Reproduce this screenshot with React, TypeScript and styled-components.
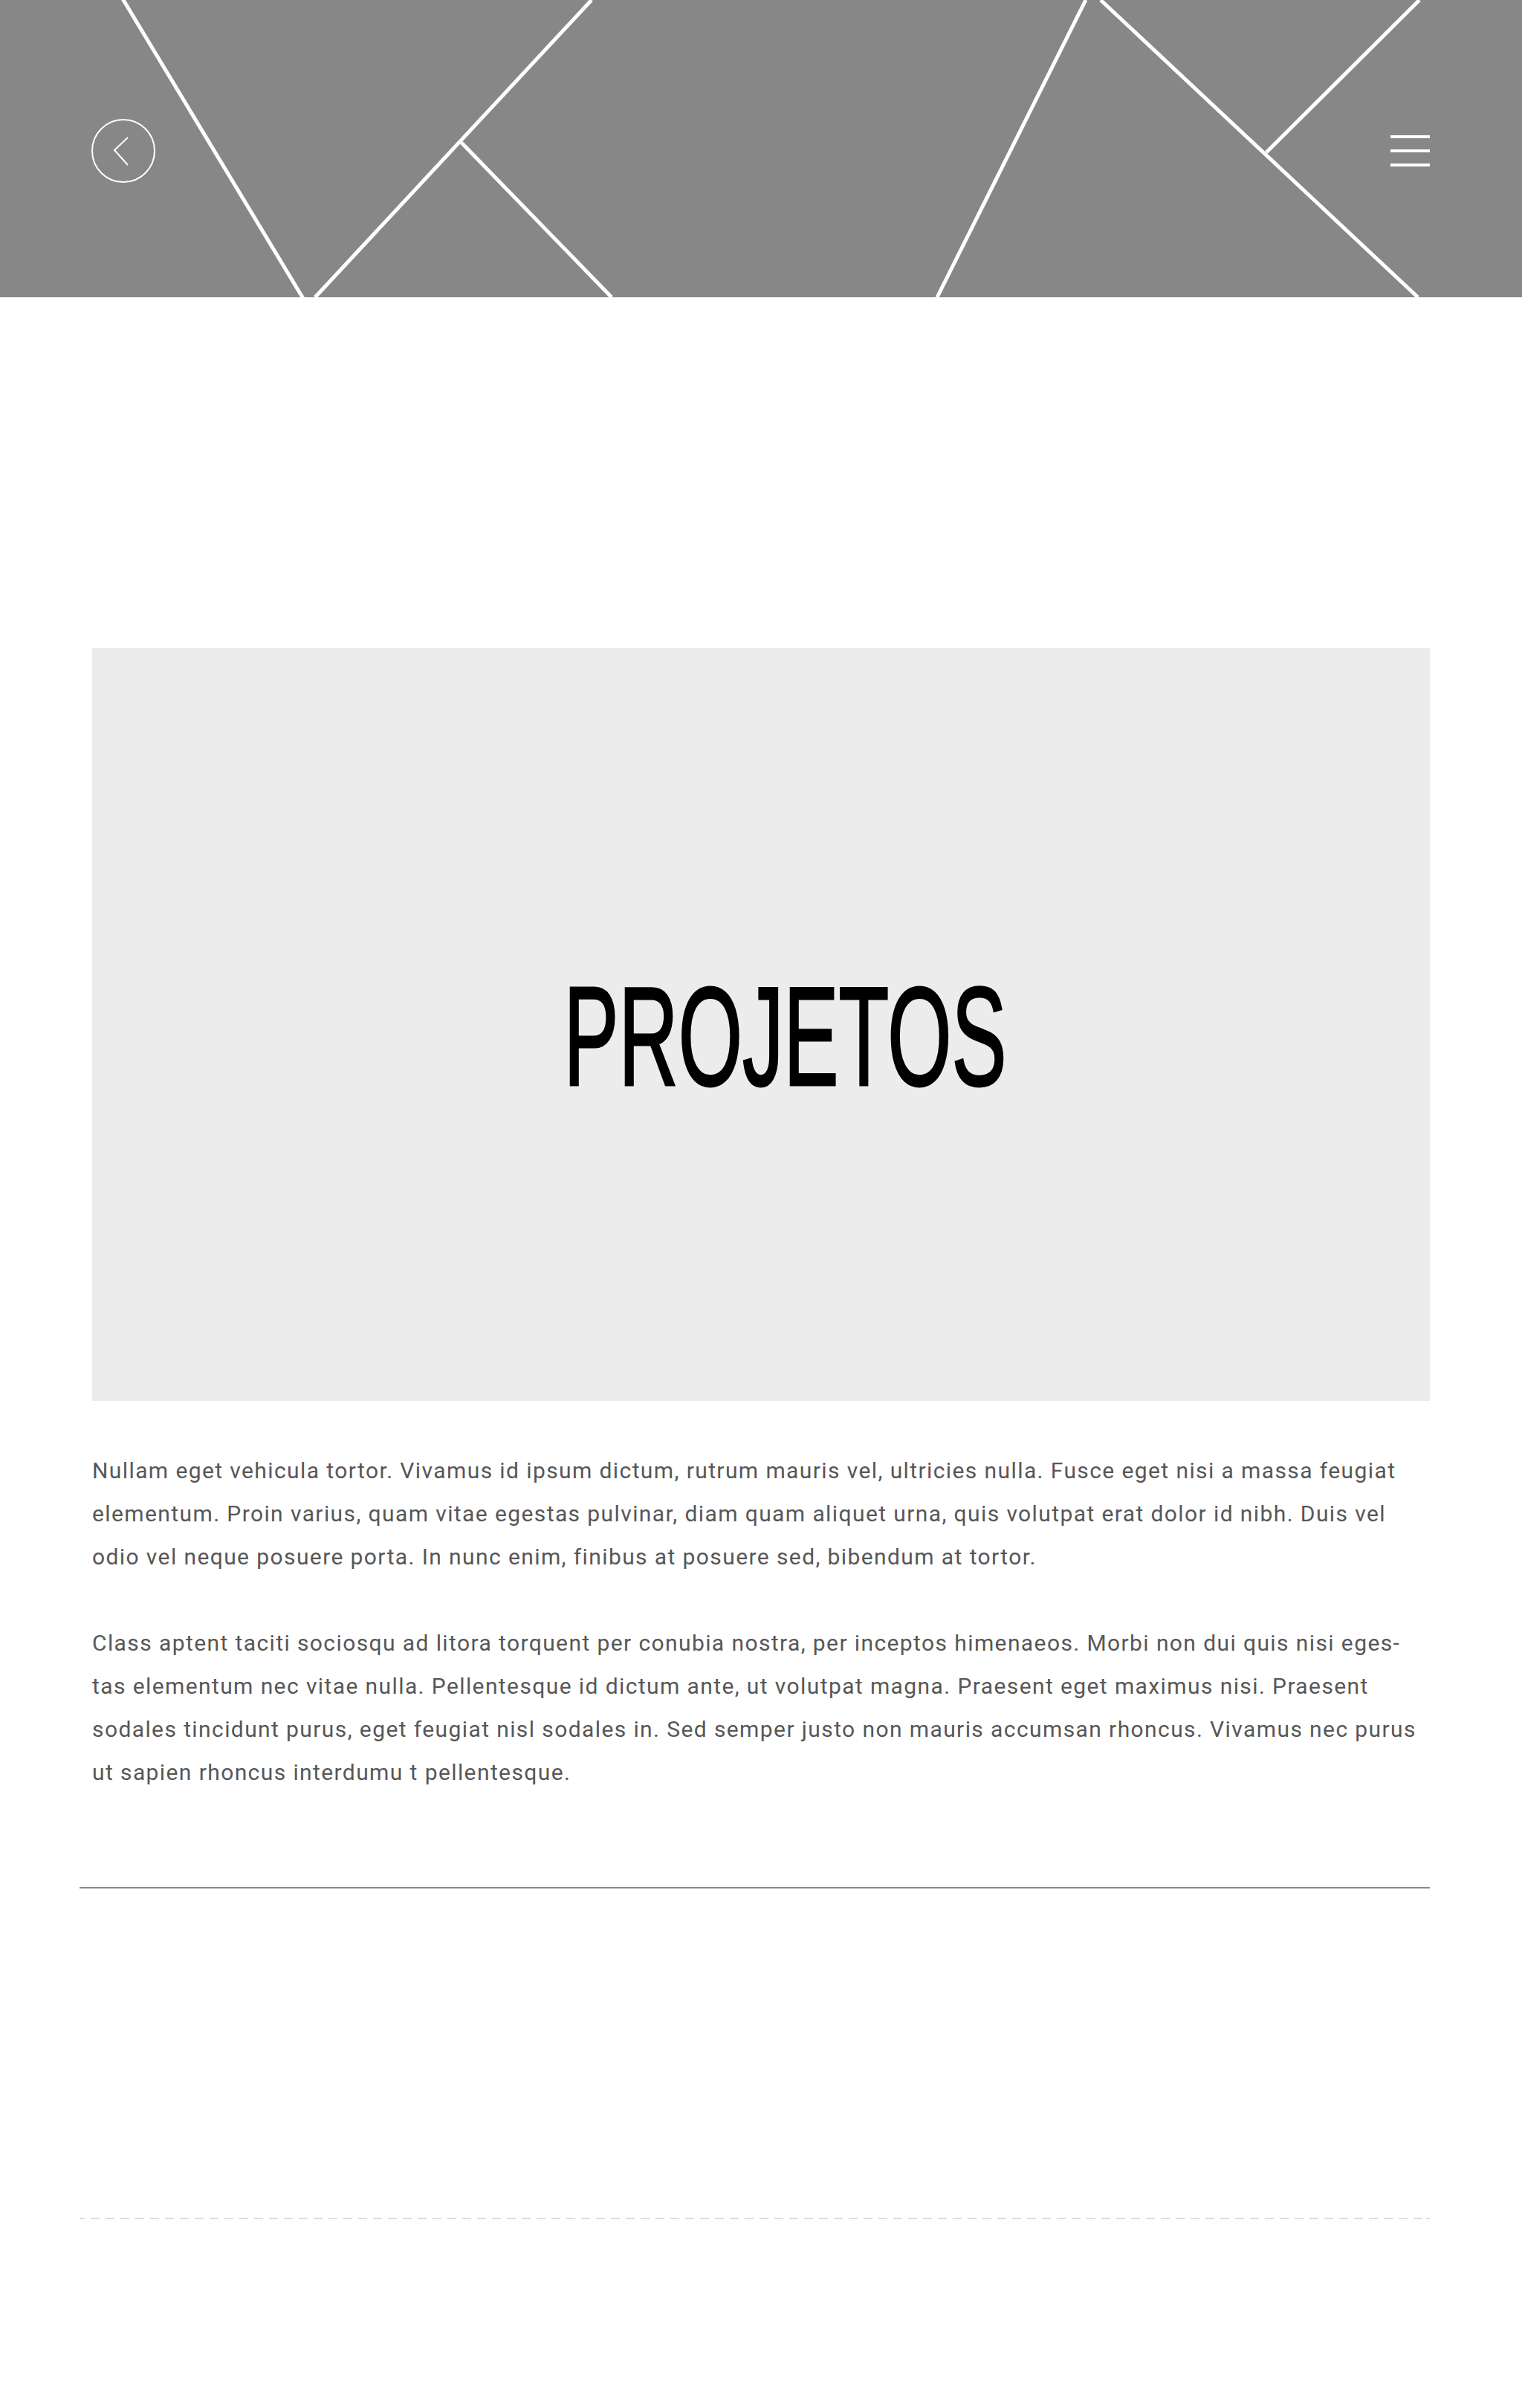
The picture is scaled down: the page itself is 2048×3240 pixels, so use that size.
import React from "react";
import styled, { createGlobalStyle } from "styled-components";

const GlobalStyle = createGlobalStyle`
  html, body {
    margin: 0;
    padding: 0;
    background: #ffffff;
  }
  body {
    font-family: Roboto, "Liberation Sans", Arial, sans-serif;
  }
`;

const Page = styled.div`
  width: 2048px;
  min-height: 3240px;
  background: #ffffff;
`;

const Header = styled.header`
  position: relative;
  height: 400px;
  background: #878787;
  overflow: hidden;
`;

const HeaderLines = styled.svg`
  position: absolute;
  inset: 0;
  width: 100%;
  height: 100%;
`;

const HeaderBar = styled.div`
  position: relative;
  height: 100%;
  box-sizing: border-box;
  display: flex;
  align-items: center;
  justify-content: space-between;
  padding: 6px 124px 0 122px;
`;

const BackButton = styled.button`
  width: 88px;
  height: 88px;
  padding: 0;
  border: none;
  background: transparent;
  cursor: pointer;
  display: block;
`;

const MenuButton = styled.button`
  width: 53px;
  height: 42px;
  padding: 0;
  border: none;
  background: transparent;
  cursor: pointer;
  display: flex;
  flex-direction: column;
  justify-content: space-between;
`;

const MenuBar = styled.span`
  display: block;
  width: 53px;
  height: 4px;
  background: #ffffff;
`;

const Main = styled.main`
  padding: 472px 124px 0 107px;
`;

const Hero = styled.section`
  margin-left: 17px;
  height: 1013px;
  background: #ececec;
  display: flex;
  align-items: center;
  justify-content: center;
`;

const Title = styled.h1`
  margin: 0;
  padding: 32px 0 0 112px;
  font-family: "Liberation Sans", Arial, sans-serif;
  font-weight: 400;
  font-size: 189px;
  line-height: 1;
  color: #000000;
  letter-spacing: 0;
  transform: scaleX(0.587);
  -webkit-text-stroke: 3px #000000;
`;

const Article = styled.article`
  margin: 65px 0 0 17px;
`;

const Paragraph = styled.p`
  margin: 0 0 58px 0;
  font-family: Roboto, "Liberation Sans", Arial, sans-serif;
  font-size: 30px;
  line-height: 58px;
  letter-spacing: 1.4px;
  color: #575757;
  &:last-child {
    margin-bottom: 0;
  }
`;

const Rule = styled.hr<{ $dashed?: boolean; $top: number }>`
  margin: ${(p) => p.$top}px 0 0 0;
  border: none;
  height: 2px;
  background: ${(p) =>
    p.$dashed
      ? "repeating-linear-gradient(to right, #dddddd 0 12px, transparent 12px 20px)"
      : "#888888"};
  background-position: ${(p) => (p.$dashed ? "-5px 0" : "0 0")};
`;

const BackIcon = () => (
  <svg width="88" height="88" viewBox="0 0 88 88" fill="none">
    <circle cx="44" cy="44" r="42" stroke="#ffffff" strokeWidth="2" />
    <path d="M50 26 L32 43 L50 63" stroke="#ffffff" strokeWidth="2" />
  </svg>
);

export default function App() {
  return (
    <>
      <GlobalStyle />
      <Page>
        <Header>
          <HeaderLines viewBox="0 0 2048 400" preserveAspectRatio="none">
            <g stroke="#ffffff" strokeWidth="5" fill="none">
              <line x1="163" y1="-5" x2="410" y2="405" />
              <line x1="796" y1="0" x2="424" y2="400" />
              <line x1="621" y1="192" x2="823" y2="400" />
              <line x1="1461" y1="0" x2="1261" y2="400" />
              <line x1="1481" y1="0" x2="1908" y2="400" />
              <line x1="1910" y1="0" x2="1704" y2="205" />
            </g>
          </HeaderLines>
          <HeaderBar>
            <BackButton aria-label="Voltar">
              <BackIcon />
            </BackButton>
            <MenuButton aria-label="Menu">
              <MenuBar />
              <MenuBar />
              <MenuBar />
            </MenuButton>
          </HeaderBar>
        </Header>
        <Main>
          <Hero>
            <Title>PROJETOS</Title>
          </Hero>
          <Article>
            <Paragraph>
              Nullam eget vehicula tortor. Vivamus id ipsum dictum, rutrum mauris vel, ultricies nulla. Fusce eget nisi a massa feugiat
              <br />
              elementum. Proin varius, quam vitae egestas pulvinar, diam quam aliquet urna, quis volutpat erat dolor id nibh. Duis vel
              <br />
              odio vel neque posuere porta. In nunc enim, finibus at posuere sed, bibendum at tortor.
            </Paragraph>
            <Paragraph>
              Class aptent taciti sociosqu ad litora torquent per conubia nostra, per inceptos himenaeos. Morbi non dui quis nisi eges-
              <br />
              tas elementum nec vitae nulla. Pellentesque id dictum ante, ut volutpat magna. Praesent eget maximus nisi. Praesent
              <br />
              sodales tincidunt purus, eget feugiat nisl sodales in. Sed semper justo non mauris accumsan rhoncus. Vivamus nec purus
              <br />
              ut sapien rhoncus interdumu t pellentesque.
            </Paragraph>
          </Article>
          <Rule $top={125} />
          <Rule $top={443} $dashed />
        </Main>
      </Page>
    </>
  );
}
